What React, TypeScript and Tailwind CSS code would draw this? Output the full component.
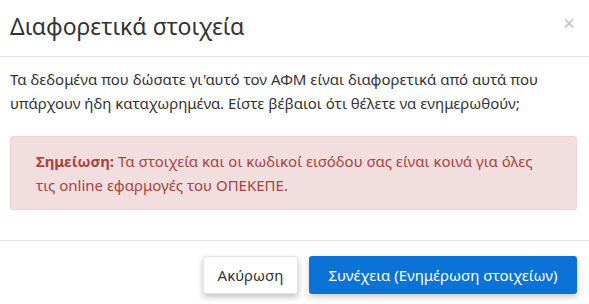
export default function App() {
  return (
    <div className="w-[589px] h-[304px] bg-white overflow-hidden text-[#333] font-['Noto_Sans',sans-serif]">
      {/* header */}
      <div className="flex items-start justify-between h-[57px] pl-[10px] pr-[14px] pt-[11px] border-b border-[#e5e5e5]">
        <div className="text-[23px] leading-[30px] text-[#333]">Διαφορετικά στοιχεία</div>
        <div className="text-[21px] leading-[20px] text-[#c4c4c4] mt-[2px]">×</div>
      </div>

      {/* body */}
      <div className="pl-[10px] pr-[12px] pt-[10px] pb-[30px] border-b border-[#e5e5e5]">
        <p className="text-[15px] leading-[24px]">
          Τα δεδομένα που δώσατε γι'αυτό τον ΑΦΜ είναι διαφορετικά από αυτά που υπάρχουν ήδη καταχωρημένα. Είστε βέβαιοι ότι θέλετε να ενημερωθούν;
        </p>
        <div className="mt-[21px] px-[25px] py-[12px] bg-[#f2dede] border border-[#efd3d7] rounded-[3px] text-[#a94442] text-[15px] leading-[24px]">
          <b className="font-bold">Σημείωση:</b> Τα στοιχεία και οι κωδικοί εισόδου σας είναι κοινά για όλες τις online εφαρμογές του ΟΠΕΚΕΠΕ.
        </div>
      </div>

      {/* footer */}
      <div className="flex justify-end gap-[11px] pt-[15px] pr-[12px]">
        <button className="h-[38px] w-[95px] bg-white rounded-[3px] border border-[#e6e6e6] shadow-[0_3px_6px_rgba(0,0,0,0.25)] text-[15px] text-[#333]">
          Ακύρωση
        </button>
        <button className="h-[38px] w-[268px] bg-[#0b72d6] rounded-[3px] shadow-[0_3px_6px_rgba(0,0,0,0.2)] text-[15px] text-white">
          Συνέχεια (Ενημέρωση στοιχείων)
        </button>
      </div>
    </div>
  );
}
